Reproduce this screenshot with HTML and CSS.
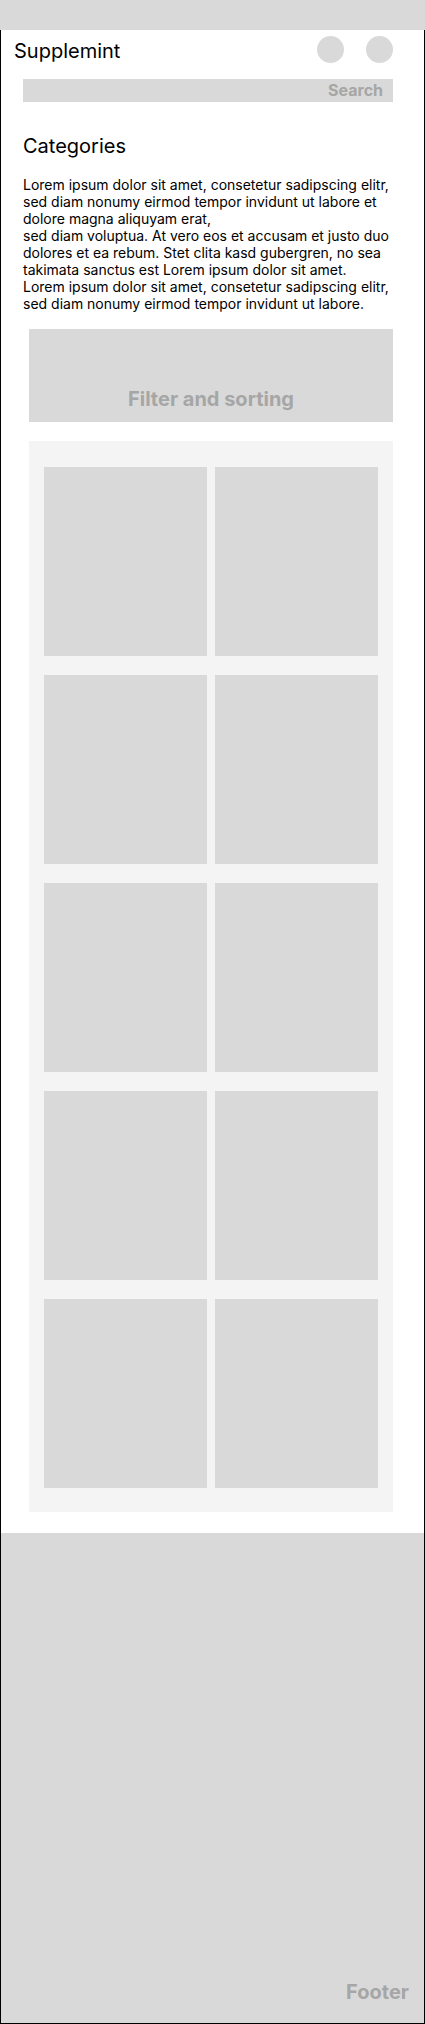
FILE: index.html
```html
<!DOCTYPE html>
<html lang="en">
<head>
<meta charset="utf-8">
<title>Supplemint – Categories</title>
<link rel="stylesheet" href="styles.css">
</head>
<body>
<div class="topbar"></div>
<div class="page">
  <header class="header">
    <div class="brand">Supplemint</div>
    <div class="header-icons">
      <span class="icon-circle"></span>
      <span class="icon-circle"></span>
    </div>
  </header>
  <main class="main">
    <div class="search">Search</div>
    <h1 class="title">Categories</h1>
    <p class="intro">Lorem ipsum dolor sit amet, consetetur sadipscing elitr, sed diam nonumy eirmod tempor invidunt ut labore et dolore magna aliquyam erat,<br>sed diam voluptua. At vero eos et accusam et justo duo dolores et ea rebum. Stet clita kasd gubergren, no sea takimata sanctus est Lorem ipsum dolor sit amet.<br>Lorem ipsum dolor sit amet, consetetur sadipscing elitr, sed diam nonumy eirmod tempor invidunt ut labore.</p>
    <div class="filter">Filter and sorting</div>
    <section class="products">
      <div class="card"></div>
      <div class="card"></div>
      <div class="card"></div>
      <div class="card"></div>
      <div class="card"></div>
      <div class="card"></div>
      <div class="card"></div>
      <div class="card"></div>
      <div class="card"></div>
      <div class="card"></div>
    </section>
  </main>
  <footer class="footer">Footer</footer>
</div>
</body>
</html>
```
FILE: styles.css
```css
* {
  box-sizing: border-box;
}

body {
  margin: 0;
  font-family: Inter, "Noto Sans", sans-serif;
  color: #000;
  background: #fff;
}

.topbar {
  height: 30px;
  background: #d9d9d9;
}

.page {
  width: 425px;
  height: 1994px;
  border: 1px solid #000;
  border-top: none;
  display: flex;
  flex-direction: column;
}

.header {
  display: flex;
  justify-content: space-between;
  align-items: flex-start;
  padding: 6px 31px 16px 13px;
}

.brand {
  margin-top: 3px;
  font-size: 20px;
  line-height: 24px;
}

.header-icons {
  display: flex;
  gap: 22px;
}

.icon-circle {
  width: 27px;
  height: 27px;
  border-radius: 50%;
  background: #d9d9d9;
}

.main {
  margin: 0 31px 0 22px;
  display: flex;
  flex-direction: column;
}

.search {
  height: 23px;
  line-height: 23px;
  background: #d9d9d9;
  color: #a6a6a6;
  font-weight: 700;
  font-size: 16px;
  text-align: right;
  padding-right: 10px;
}

.title {
  margin: 32px 0 0;
  font-size: 20px;
  line-height: 24px;
  font-weight: 400;
}

.intro {
  margin: 18px 0 0;
  font-size: 14px;
  line-height: 17px;
}

.filter {
  margin: 17px 0 0 6px;
  height: 93px;
  background: #d9d9d9;
  color: #a6a6a6;
  font-weight: 700;
  font-size: 20px;
  line-height: 24px;
  display: flex;
  align-items: flex-end;
  justify-content: center;
  padding-bottom: 11px;
}

.products {
  margin: 19px 0 0 6px;
  background: #f4f4f4;
  padding: 26px 14px 24px 15px;
  display: grid;
  grid-template-columns: repeat(2, 163px);
  column-gap: 8px;
  row-gap: 19px;
}

.card {
  height: 189px;
  background: #d9d9d9;
}

.footer {
  margin-top: 21px;
  flex: 1;
  background: #d9d9d9;
  color: #a6a6a6;
  font-weight: 700;
  font-size: 20px;
  line-height: 24px;
  display: flex;
  align-items: flex-end;
  justify-content: flex-end;
  padding: 0 15px 19px 0;
}
```
